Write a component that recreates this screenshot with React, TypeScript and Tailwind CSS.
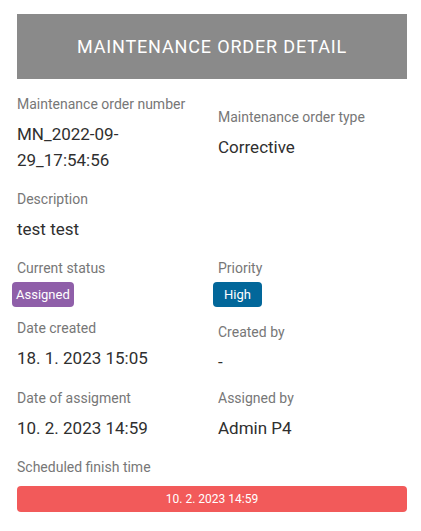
import React from 'react';

const Label = ({ children }: { children: React.ReactNode }) => (
  <p className="text-[14px] leading-[20px] text-[#777777]">{children}</p>
);

const Value = ({ children, className = '' }: { children: React.ReactNode; className?: string }) => (
  <p className={`mt-[7px] text-[17px] leading-[26px] text-[#2f2f2f] ${className}`}>{children}</p>
);

export default function App() {
  return (
    <div className="min-h-screen w-full bg-white pl-[17px] pr-[14px] pt-[14px] font-['Roboto',sans-serif]">
      <div className="flex h-[65px] items-center justify-center bg-[#8a8a8a]">
        <h1 className="text-[18px] tracking-[0.85px] text-white">MAINTENANCE ORDER DETAIL</h1>
      </div>

      <div className="mt-[15px] grid grid-cols-[201px_1fr]">
        <div>
          <Label>Maintenance order number</Label>
          <Value className="max-w-[150px] break-words">MN_2022-09-29_17:54:56</Value>
        </div>
        <div className="pt-[13px]">
          <Label>Maintenance order type</Label>
          <Value>Corrective</Value>
        </div>
      </div>

      <div className="mt-[16px]">
        <Label>Description</Label>
        <Value>test test</Value>
      </div>

      <div className="mt-[16px] grid grid-cols-[201px_1fr]">
        <div>
          <Label>Current status</Label>
          <span className="-ml-[5px] mt-[4px] inline-flex h-[25px] items-center rounded-[4px] bg-[#8f5fa9] px-[4px] text-[13px] text-white">
            Assigned
          </span>
        </div>
        <div>
          <Label>Priority</Label>
          <span className="-ml-[5px] mt-[4px] inline-flex h-[25px] items-center rounded-[4px] bg-[#02679a] px-[11px] text-[13px] text-white">
            High
          </span>
        </div>
      </div>

      <div className="mt-[11px] grid grid-cols-[201px_1fr]">
        <div>
          <Label>Date created</Label>
          <Value>18. 1. 2023 15:05</Value>
        </div>
        <div className="pt-[4px]">
          <Label>Created by</Label>
          <Value>-</Value>
        </div>
      </div>

      <div className="mt-[13px] grid grid-cols-[201px_1fr]">
        <div>
          <Label>Date of assigment</Label>
          <Value>10. 2. 2023 14:59</Value>
        </div>
        <div>
          <Label>Assigned by</Label>
          <Value>Admin P4</Value>
        </div>
      </div>

      <div className="mt-[16px]">
        <Label>Scheduled finish time</Label>
        <div className="mt-[9px] flex h-[26px] items-center justify-center rounded-[4px] bg-[#f25a5a] text-[12px] text-white">
          10. 2. 2023 14:59
        </div>
      </div>
    </div>
  );
}
